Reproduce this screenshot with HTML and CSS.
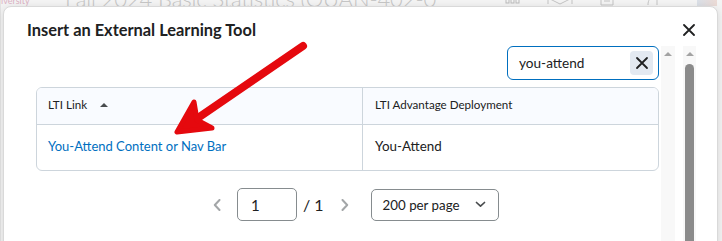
FILE: index.html
```html
<!DOCTYPE html>
<html lang="en">
<head>
<meta charset="utf-8">
<title>Insert an External Learning Tool</title>
<link rel="stylesheet" href="styles.css">
</head>
<body>
<div class="page">
  <div class="backdrop">
    <span class="bg-uni">iversity</span>
    <span class="bg-course">Fall 2024 Basic Statistics (QUAN-402-0</span>
    <span class="bg-icons">
      <svg class="bg-ico" width="16" height="8" viewBox="0 0 16 8"><rect x="1" y="0" width="3" height="5" fill="none" stroke="#bbb"/><rect x="6" y="0" width="3" height="5" fill="none" stroke="#bbb"/><rect x="11" y="0" width="3" height="5" fill="none" stroke="#bbb"/></svg>
      <svg class="bg-ico" width="26" height="8" viewBox="0 0 26 8"><path d="M1 0 V6 M25 0 V6 M1 0 L13 6 L25 0" fill="none" stroke="#c4c4c4"/></svg>
      <svg class="bg-ico" width="20" height="8" viewBox="0 0 20 8"><path d="M2 0 V7 H14 V0 M5 3 H11 M16 0 V2" fill="none" stroke="#c4c4c4"/></svg>
      <svg class="bg-ico" width="16" height="8" viewBox="0 0 16 8"><path d="M3 7 C3 2 5 0 8 0 M12 0 V7" fill="none" stroke="#c4c4c4"/></svg>
    </span>
    <span class="bg-avatar"></span>
  </div>

  <div class="dialog">
    <div class="dlg-head">
      <h1 class="dlg-title">Insert an External Learning Tool</h1>
      <button class="dlg-close" aria-label="Close">
        <svg width="12" height="12" viewBox="0 0 12 12"><path d="M1 1 L11 11 M11 1 L1 11" stroke="#202122" stroke-width="1.8" stroke-linecap="round"/></svg>
      </button>
    </div>
    <div class="dlg-body">
      <div class="content">
        <div class="search-row">
          <div class="search">
            <span class="search-text">you-attend</span>
            <span class="search-clear">
              <svg width="14" height="14" viewBox="0 0 14 14"><path d="M2 2 L12 12 M12 2 L2 12" stroke="#202122" stroke-width="1.8" stroke-linecap="round"/></svg>
            </span>
          </div>
        </div>

        <div class="grid">
          <div class="row head">
            <div class="cell c1">LTI Link <span class="sort"></span></div>
            <div class="cell c2">LTI Advantage Deployment</div>
          </div>
          <div class="row body">
            <div class="cell c1"><a class="link" href="#">You-Attend Content or Nav Bar</a></div>
            <div class="cell c2">You-Attend</div>
          </div>
        </div>

        <div class="pager">
          <svg class="chev chev-l" width="8" height="12" viewBox="0 0 8 12"><path d="M6.5 1 L1.8 6 L6.5 11" fill="none" stroke="#a3a6a8" stroke-width="2" stroke-linecap="round" stroke-linejoin="round"/></svg>
          <div class="page-input">1</div>
          <span class="page-of">/ 1</span>
          <svg class="chev chev-r" width="8" height="12" viewBox="0 0 8 12"><path d="M1.5 1 L6.2 6 L1.5 11" fill="none" stroke="#a3a6a8" stroke-width="2" stroke-linecap="round" stroke-linejoin="round"/></svg>
          <div class="per-page">
            <span>200 per page</span>
            <svg width="11" height="7" viewBox="0 0 11 7"><path d="M1.5 1.5 L5.5 5.2 L9.5 1.5" fill="none" stroke="#494c4e" stroke-width="1.7" stroke-linecap="round" stroke-linejoin="round"/></svg>
          </div>
        </div>
      </div>
      <div class="sb sb-inner"><span class="sb-arrow"></span></div>
      <div class="sb sb-outer"><span class="sb-arrow"></span><span class="sb-thumb"></span></div>
    </div>
  </div>

  <svg class="annot" width="722" height="241" viewBox="0 0 722 241">
    <line x1="303" y1="46" x2="192" y2="122" stroke="#e5090e" stroke-width="8" stroke-linecap="round"/>
    <path d="M194 102 L177 132 L212 128 L197 120 Z" fill="#e5090e" stroke="#e5090e" stroke-width="5" stroke-linejoin="round"/>
  </svg>
</div>
</body>
</html>
```

FILE: styles.css
```css
* { box-sizing: border-box; }
html, body { margin: 0; padding: 0; }
body {
  width: 722px;
  height: 241px;
  overflow: hidden;
  font-family: Lato, "Noto Sans", sans-serif;
  color: #202122;
  background: #f3f3f3;
}
.page {
  position: relative;
  width: 722px;
  height: 241px;
  overflow: hidden;
}
.backdrop {
  height: 241px;
  display: flex;
  align-items: flex-start;
  background: #f4f4f4;
  border-left: 1px solid #e4e4e4;
}
.bg-uni {
  font-size: 9px;
  line-height: 9px;
  color: #dcb2c4;
  margin-top: -4px;
  width: 64px;
}
.bg-course {
  font-size: 22px;
  font-weight: 300;
  line-height: 22px;
  margin-top: -12px;
  color: #c6c6c6;
  letter-spacing: -0.1px;
  white-space: nowrap;
  width: 440px;
}
.bg-icons {
  display: flex;
  gap: 26px;
  align-items: flex-start;
  margin-top: -2px;
}
.bg-ico { display: block; }
.bg-avatar {
  margin-left: 36px;
  width: 20px;
  height: 6px;
  background: linear-gradient(90deg, #c9d3e0, #e6c9c0);
  opacity: .6;
}

.dialog {
  position: absolute;
  left: 3px;
  top: 6px;
  right: 4px;
  bottom: -30px;
  background: #fff;
  border: 1px solid #d9d9d9;
  border-radius: 8px;
  box-shadow: 0 2px 10px rgba(0, 0, 0, 0.12);
}
.dlg-head {
  height: 39px;
  display: flex;
  align-items: center;
  justify-content: space-between;
  padding-left: 23px;
  padding-top: 7px;
}
.dlg-title {
  margin: 0;
  font-size: 16.4px;
  font-weight: 700;
  line-height: 20px;
  color: #202122;
}
.dlg-close {
  width: 24px;
  height: 24px;
  margin-right: 16px;
  padding: 0;
  border: 0;
  background: transparent;
  display: flex;
  align-items: center;
  justify-content: center;
}
.dlg-body {
  display: flex;
  align-items: stretch;
  height: 220px;
}
.content {
  margin-left: 32px;
  width: 623px;
  flex: none;
}
.search-row {
  display: flex;
  justify-content: flex-end;
}
.search {
  width: 152px;
  height: 34px;
  border: 1px solid #006fbf;
  border-radius: 6px;
  display: flex;
  align-items: center;
  justify-content: space-between;
  padding-left: 11px;
  padding-right: 5px;
}
.search-text {
  font-size: 13.6px;
}
.search-clear {
  width: 23px;
  height: 24px;
  border-radius: 4px;
  background: #e3e9f1;
  display: flex;
  align-items: center;
  justify-content: center;
}

.grid {
  margin-top: 7px;
  border: 1px solid #cdd5dc;
  border-radius: 6px;
  overflow: hidden;
}
.row {
  display: flex;
}
.row.head {
  height: 37px;
  background: #f9fbff;
  border-bottom: 1px solid #cdd5dc;
  font-size: 11.6px;
}
.row.body {
  height: 45px;
  font-size: 13.4px;
}
.row.body .cell { padding-bottom: 3px; }
.cell {
  display: flex;
  align-items: center;
  padding-left: 11px;
}
.c1 {
  width: 326px;
  border-right: 1px solid #cdd5dc;
}
.c2 {
  flex: 1;
  padding-left: 12px;
}
.row.head .cell { padding-bottom: 3px; }
.sort {
  margin-left: 13px;
  width: 0;
  height: 0;
  border-left: 4px solid transparent;
  border-right: 4px solid transparent;
  border-bottom: 4px solid #494c4e;
}
.link {
  color: #006fbf;
  text-decoration: none;
  font-size: 13px;
}

.pager {
  margin-top: 17px;
  padding-left: 177px;
  display: flex;
  align-items: center;
  height: 33px;
}
.chev { display: block; flex: none; }
.chev-l { margin-right: 16px; }
.page-input {
  width: 60px;
  height: 33px;
  border: 1px solid #868c8f;
  border-radius: 5px;
  font-size: 15px;
  display: flex;
  align-items: center;
  padding-left: 13px;
}
.page-of {
  margin-left: 6px;
  font-size: 16px;
  margin-right: 17px;
}
.chev-r { margin-right: 22px; }
.per-page {
  width: 128px;
  height: 32px;
  border: 1px solid #868c8f;
  border-radius: 5px;
  font-size: 13.3px;
  display: flex;
  align-items: center;
  justify-content: space-between;
  padding-left: 11px;
  padding-right: 12px;
}

.sb {
  flex: none;
  background: #f8f8f8;
  position: relative;
}
.sb-inner {
  margin-left: 2px;
  width: 14px;
}
.sb-outer {
  margin-left: 8px;
  width: 13px;
  display: flex;
  flex-direction: column;
  align-items: center;
}
.sb-arrow {
  display: block;
  margin: 6px auto 0;
  width: 0;
  height: 0;
  border-left: 4px solid transparent;
  border-right: 4px solid transparent;
  border-bottom: 4px solid #a3a3a3;
}
.sb-thumb {
  display: block;
  margin-top: 8px;
  width: 9px;
  flex: 1;
  background: #8b8b8b;
  border-radius: 5px 5px 0 0;
}

.annot {
  position: absolute;
  left: 0;
  top: 0;
  pointer-events: none;
}
```
